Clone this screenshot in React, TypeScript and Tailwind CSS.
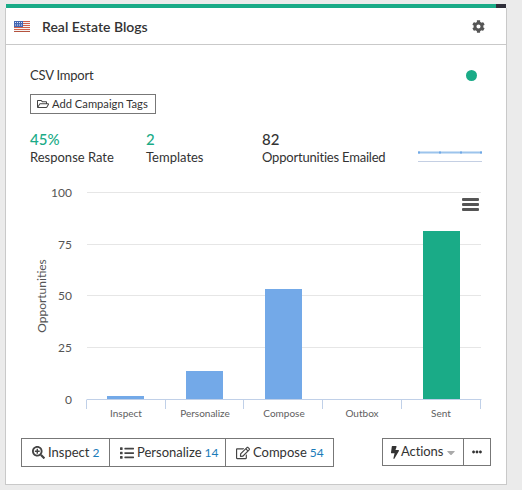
import React from "react";
import { FaCog, FaRegFolderOpen, FaSearchPlus, FaList, FaRegEdit, FaBolt, FaEllipsisH, FaCaretDown } from "react-icons/fa";

const font = { fontFamily: "Lato, 'Liberation Sans', sans-serif" };

function Flag() {
  const stripes = [0, 1, 2, 3, 4, 5];
  return (
    <svg width="16" height="11" viewBox="0 0 16 11" className="block">
      <rect width="16" height="11" fill="#f4f4f4" />
      {stripes.map((i) => (
        <rect key={i} x="0" y={i * 2} width="16" height="1" fill="#d0604a" />
      ))}
      <rect x="0" y="10" width="16" height="1" fill="#b5533f" />
      <rect width="9" height="6" fill="#4467b3" />
      {[1, 3, 5, 7].map((x) => (
        <rect key={x} x={x} y="1" width="1" height="1" fill="#dfe6f5" />
      ))}
      {[1, 3, 5, 7].map((x) => (
        <rect key={x} x={x} y="3.5" width="1" height="1" fill="#dfe6f5" />
      ))}
    </svg>
  );
}

function Chart() {
  const grid = [
    { y: 193, l: "100" },
    { y: 245, l: "75" },
    { y: 296, l: "50" },
    { y: 348, l: "25" },
  ];
  const ticks = [87, 166, 244, 323, 402, 481];
  const cats = [
    { x: 126, l: "Inspect" },
    { x: 205, l: "Personalize" },
    { x: 284, l: "Compose" },
    { x: 362, l: "Outbox" },
    { x: 441, l: "Sent" },
  ];
  return (
    <svg width="500" height="240" viewBox="6 182 500 240" className="block" style={font}>
      {grid.map((g) => (
        <g key={g.y}>
          <line x1="87" x2="481" y1={g.y - 0.5} y2={g.y - 0.5} stroke="#e6e6e6" />
          <text x="72" y={g.y + 4} textAnchor="end" fontSize="12" fill="#555">{g.l}</text>
        </g>
      ))}
      <text x="72" y="404" textAnchor="end" fontSize="12" fill="#555">0</text>
      <text x="0" y="0" transform="translate(46 296) rotate(-90)" textAnchor="middle" fontSize="12" fill="#555">Opportunities</text>
      <rect x="107" y="396" width="37" height="4" fill="#73a9e8" />
      <rect x="186" y="371" width="37" height="29" fill="#73a9e8" />
      <rect x="265" y="289" width="37" height="111" fill="#73a9e8" />
      <rect x="423" y="231" width="37" height="169" fill="#1aab87" />
      <line x1="86.5" x2="481.5" y1="399.5" y2="399.5" stroke="#c0d0e8" />
      {ticks.map((t) => (
        <line key={t} x1={t - 0.5} x2={t - 0.5} y1="400" y2="409" stroke="#c0d0e8" />
      ))}
      {cats.map((c) => (
        <text key={c.l} x={c.x} y="417" textAnchor="middle" fontSize="10" fill="#606060">{c.l}</text>
      ))}
      <rect x="462" y="198" width="17" height="3" rx="1" fill="#555" />
      <rect x="462" y="203" width="17" height="3" rx="1" fill="#555" />
      <rect x="462" y="208" width="17" height="3" rx="1" fill="#555" />
    </svg>
  );
}

export default function App() {
  return (
    <div className="w-[522px] h-[490px] bg-[#ebebeb] overflow-hidden pt-[4px]" style={font}>
      <div className="ml-[6px] w-[500px] h-[4px] flex">
        <div className="flex-1 bg-[#1aab87]" />
        <div className="w-[10px] bg-[#2f2f3a]" />
      </div>
      <div className="ml-[5px] w-[502px] h-[477px] bg-white border-x border-b border-[#c9c9c9] flex flex-col">
        <div className="h-[37px] shrink-0 border-b border-[#c9c9c9] flex items-center pl-[8px] pr-[21px]">
          <Flag />
          <span className="ml-[12px] text-[14px] font-semibold text-[#333]">Real Estate Blogs</span>
          <FaCog className="ml-auto text-[#555] text-[13px]" />
        </div>
        <div className="pl-[24px] pr-[24px] pt-[22px] shrink-0">
          <div className="flex items-center justify-between">
            <span className="text-[13px] leading-[16px] tracking-[-0.2px] text-[#333]">CSV Import</span>
            <span className="w-[11px] h-[11px] mr-[5px] rounded-full bg-[#1aab87]" />
          </div>
          <div className="mt-[11px] flex items-center h-[20px] w-[126px] border border-[#777] pl-[6px] gap-[3px] text-[11.2px] text-[#333] whitespace-nowrap">
            <FaRegFolderOpen className="text-[12px] text-[#444] shrink-0" />
            <span>Add Campaign Tags</span>
          </div>
          <div className="mt-[16px] flex items-start">
            <div className="w-[116px] shrink-0">
              <div className="text-[15px] leading-[18px] font-medium text-[#1aab87]">45%</div>
              <div className="text-[13px] leading-[18px] text-[#333]">Response Rate</div>
            </div>
            <div className="w-[116px] shrink-0">
              <div className="text-[15px] leading-[18px] font-medium text-[#1aab87]">2</div>
              <div className="text-[13px] leading-[18px] text-[#333]">Templates</div>
            </div>
            <div className="w-[156px] shrink-0">
              <div className="text-[15px] leading-[18px] font-medium text-[#333]">82</div>
              <div className="text-[13px] leading-[18px] tracking-[-0.2px] text-[#333]">Opportunities Emailed</div>
            </div>
            <svg width="64" height="12" viewBox="0 0 64 12" className="mt-[21px] shrink-0">
              <line x1="0" x2="64" y1="1.5" y2="1.5" stroke="#9cc4ec" strokeWidth="2" />
              {[0, 21, 42, 62].map((x) => (
                <rect key={x} x={x} y="0.5" width="2" height="2" fill="#6fa8e6" />
              ))}
              <line x1="0" x2="64" y1="10.5" y2="10.5" stroke="#c4cfe3" />
            </svg>
          </div>
        </div>
        <div className="mt-[16px] shrink-0">
          <Chart />
        </div>
        <div className="mt-[16px] ml-[15px] mr-[15px] flex items-start justify-between text-[13px] text-[#333] whitespace-nowrap">
          <div className="flex h-[29px] border border-[#777]">
            <div className="flex items-center gap-[3px] px-[10px] border-r border-[#777] w-[88px]">
              <FaSearchPlus className="text-[13px] text-[#444] shrink-0" />
              <span>Inspect</span>
              <span className="text-[#1a7bb9] text-[12px]">2</span>
            </div>
            <div className="flex items-center gap-[3px] px-[10px] border-r border-[#777] w-[116px]">
              <FaList className="text-[14px] text-[#444] shrink-0" />
              <span>Personalize</span>
              <span className="text-[#1a7bb9] text-[12px]">14</span>
            </div>
            <div className="flex items-center gap-[3px] px-[10px] w-[107px]">
              <FaRegEdit className="text-[14px] text-[#444] shrink-0" />
              <span>Compose</span>
              <span className="text-[#1a7bb9] text-[12px]">54</span>
            </div>
          </div>
          <div className="flex h-[28px] border border-[#777]">
            <div className="flex items-center gap-[2px] pl-[8px] w-[81px] border-r border-[#777]">
              <FaBolt className="w-[8px] h-[13px] text-[#333] shrink-0" />
              <span className="tracking-[-0.1px]">Actions</span>
              <FaCaretDown className="w-[8px] h-[13px] ml-[2px] text-[#aaa] shrink-0" />
            </div>
            <div className="flex items-center justify-center w-[26px]">
              <FaEllipsisH className="text-[10px] text-[#333]" />
            </div>
          </div>
        </div>
      </div>
    </div>
  );
}
